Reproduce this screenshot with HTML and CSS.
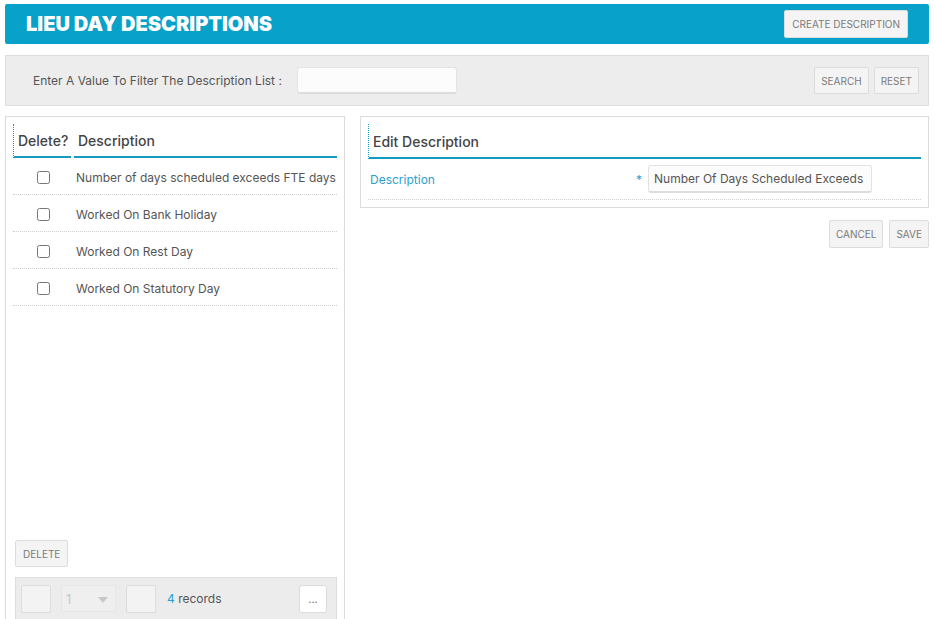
FILE: index.html
```html
<!DOCTYPE html>
<html>
<head>
<meta charset="utf-8">
<link rel="stylesheet" href="styles.css">
</head>
<body>
<div class="page">
  <header class="topbar">
    <h1 class="title">LIEU DAY DESCRIPTIONS</h1>
    <button class="btn btn-create">Create Description</button>
  </header>

  <div class="filter">
    <label class="filter-label">Enter A Value To Filter The Description List :</label>
    <input class="filter-input" type="text">
    <div class="filter-actions">
      <button class="btn">Search</button>
      <button class="btn">Reset</button>
    </div>
  </div>

  <div class="panels">
    <section class="panel panel-list">
      <div class="thead">
        <div class="th th-del">Delete?</div>
        <div class="th th-desc">Description</div>
      </div>
      <div class="row"><div class="cell-del"><input type="checkbox"></div><div class="cell-desc">Number of days scheduled exceeds FTE days</div></div>
      <div class="row"><div class="cell-del"><input type="checkbox"></div><div class="cell-desc">Worked On Bank Holiday</div></div>
      <div class="row"><div class="cell-del"><input type="checkbox"></div><div class="cell-desc">Worked On Rest Day</div></div>
      <div class="row"><div class="cell-del"><input type="checkbox"></div><div class="cell-desc">Worked On Statutory Day</div></div>
      <div class="spacer"></div>
      <div class="list-footer">
        <button class="btn btn-delete">Delete</button>
        <div class="pager">
          <span class="pbox"></span>
          <span class="pselect">1<span class="caret"></span></span>
          <span class="pbox"></span>
          <span class="records"><span class="num">4</span> records</span>
          <button class="more">...</button>
        </div>
      </div>
    </section>

    <div class="right-col">
      <section class="panel panel-edit">
        <div class="edit-head">Edit Description</div>
        <div class="form-row">
          <span class="form-label">Description</span>
          <span class="req">*</span>
          <input class="form-input" type="text" value="Number Of Days Scheduled Exceeds FTE Days">
        </div>
      </section>
      <div class="edit-actions">
        <button class="btn">Cancel</button>
        <button class="btn">Save</button>
      </div>
    </div>
  </div>
</div>
</body>
</html>
```
FILE: styles.css
```css
* { box-sizing: border-box; }
html, body { margin: 0; padding: 0; background: #fff; overflow: hidden; }
body { font-family: Inter, "Noto Sans", sans-serif; color: #555; }
.page { padding: 4px 6px 0 5px; width: 935px; height: 619px; }

.topbar {
  height: 40px;
  background: #08a1c9;
  border-radius: 2px;
  display: flex;
  align-items: center;
  justify-content: space-between;
  padding: 0 21px 0 21px;
}
.title {
  margin: 0;
  color: #fff;
  font-size: 20px;
  font-weight: 900;
  letter-spacing: 0;
}

.btn {
  height: 27px;
  padding: 0 8px;
  background: #f4f4f4;
  border: 1px solid #dcdcdc;
  border-radius: 2px;
  font-family: Inter, "Noto Sans", sans-serif;
  font-size: 10px;
  color: #7a7a7a;
  text-transform: uppercase;
  cursor: pointer;
}
.btn-create { padding: 0 7px; height: 28px; }

.filter {
  margin-top: 11px;
  height: 51px;
  background: #ededed;
  border: 1px solid #dedede;
  display: flex;
  align-items: center;
  padding: 0 9px 0 27px;
}
.filter-label { font-size: 12px; color: #555; margin-right: 15px; }
.filter-input {
  width: 160px;
  height: 27px;
  background: #fcfcfc;
  border: 1px solid #e4e4e4;
  border-bottom: 2px solid #dcdcdc;
  border-radius: 3px;
  margin-top: -1px;
}
.filter-actions { margin-left: auto; display: flex; gap: 5px; }
.filter-actions .btn { padding: 0 6px; }

.panels { margin-top: 10px; display: flex; gap: 15px; align-items: flex-start; }

.panel { border: 1px solid #dcdcdc; background: #fff; }
.panel-list {
  width: 340px;
  height: 512px;
  padding: 7px;
  display: flex;
  flex-direction: column;
}

.thead { display: flex; gap: 3px; }
.th {
  height: 34px;
  border-bottom: 2px solid #159bc0;
  font-size: 14px;
  font-weight: 500;
  color: #444;
  display: flex;
  align-items: center;
  padding-left: 4px;
  padding-top: 1px;
}
.th-del { width: 58px; flex-shrink: 0; border-left: 1px dotted #159bc0; }
.th-desc { flex: 1; padding-left: 4px; }

.row {
  display: flex;
  height: 37px;
  align-items: center;
  border-bottom: 1px dotted #cfcfcf;
  gap: 3px;
  padding-top: 2px;
}
.cell-del { width: 58px; flex-shrink: 0; display: flex; justify-content: center; }
.cell-del input { margin: 0 0 0 2px; width: 13px; height: 13px; }
.cell-desc { font-size: 12px; color: #555; padding-left: 2px; white-space: nowrap; }

.spacer { flex: 1; }
.list-footer { padding-left: 2px; }
.btn-delete { padding: 0 7px; margin-bottom: 10px; }

.pager {
  height: 43px;
  background: #ececec;
  border: 1px solid #dedede;
  display: flex;
  align-items: center;
  padding: 0 9px 0 5px;
}
.pbox {
  width: 30px;
  height: 28px;
  background: #f3f3f3;
  border: 1px solid #dcdcdc;
  border-radius: 2px;
}
.pselect {
  margin: 0 10px;
  width: 55px;
  height: 27px;
  background: #efefef;
  border: 1px solid #e6e6e6;
  border-radius: 2px;
  color: #c8c8c8;
  font-size: 13px;
  display: flex;
  align-items: center;
  padding-left: 4px;
  position: relative;
}
.caret {
  position: absolute;
  right: 7px;
  top: 11px;
  width: 0; height: 0;
  border-left: 5px solid transparent;
  border-right: 5px solid transparent;
  border-top: 6px solid #c8c8c8;
}
.records { margin-left: 11px; font-size: 12px; color: #555; }
.records .num { color: #2a9fd0; }
.more {
  margin-left: auto;
  width: 28px;
  height: 28px;
  background: #fff;
  border: 1px solid #dcdcdc;
  border-radius: 3px;
  font-size: 11px;
  color: #777;
  padding: 0;
  font-family: Inter, sans-serif;
}

.right-col { flex: 1; display: flex; flex-direction: column; }
.panel-edit { padding: 7px 7px 7px 7px; }
.edit-head {
  height: 35px;
  border-left: 1px dotted #159bc0;
  border-bottom: 2px solid #159bc0;
  font-size: 14px;
  font-weight: 500;
  color: #444;
  display: flex;
  align-items: center;
  padding-left: 4px;
  padding-top: 1px;
}
.form-row {
  height: 41px;
  display: flex;
  align-items: center;
  border-bottom: 1px dotted #cfcfcf;
  padding-left: 2px;
}
.form-label { font-size: 12px; color: #2a9fd0; width: 266px; }
.req { color: #2a9fd0; font-size: 12px; width: 12px; }
.form-input {
  width: 224px;
  height: 28px;
  background: #fcfcfc;
  border: 1px solid #e2e2e2;
  border-bottom: 2px solid #dcdcdc;
  border-radius: 3px;
  font-family: Inter, sans-serif;
  font-size: 12px;
  color: #555;
  padding: 0 5px;
}
.edit-actions { display: flex; justify-content: flex-end; gap: 6px; margin-top: 12px; }
.edit-actions .btn { height: 28px; padding: 0 6px; }
```
